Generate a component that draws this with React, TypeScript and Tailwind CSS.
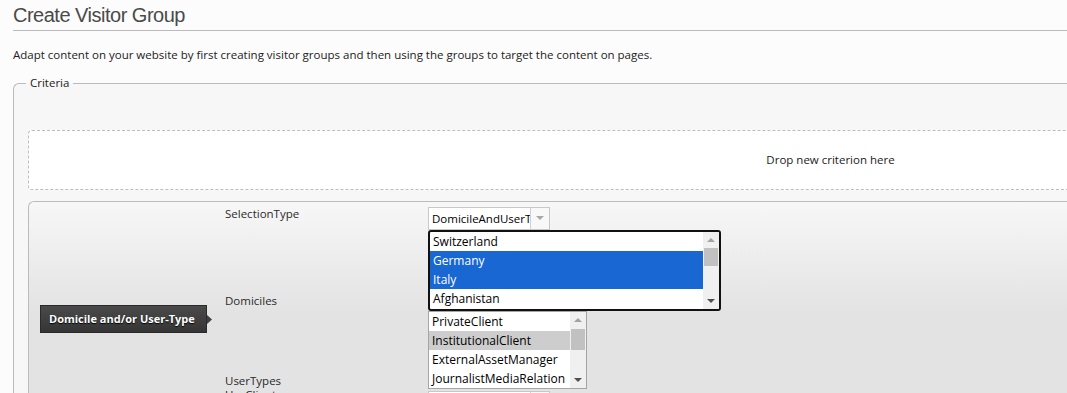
import React from "react";

type SBProps = { thumbTop: number; thumbH: number };

function Scrollbar({ thumbTop, thumbH }: SBProps) {
  return (
    <div className="relative w-[16px] h-full bg-[#f0f0f0] shrink-0">
      <svg className="absolute left-[4px] top-[5px]" width="8" height="5" viewBox="0 0 8 5">
        <path d="M0 5 L4 1 L8 5 Z" fill="#a3a3a3" />
      </svg>
      <div className="absolute left-[1px] w-[14px] bg-[#c1c1c1]" style={{ top: thumbTop, height: thumbH }} />
      <svg className="absolute left-[4px] bottom-[5px]" width="8" height="5" viewBox="0 0 8 5">
        <path d="M0 0 L8 0 L4 4 Z" fill="#505050" />
      </svg>
    </div>
  );
}

function Item({ text, sel }: { text: string; sel?: "blue" | "gray" }) {
  const cls =
    sel === "blue"
      ? "bg-[#1967d2] text-white"
      : sel === "gray"
      ? "bg-[#cdcdcd] text-black"
      : "text-black";
  return <div className={`h-[19px] leading-[19px] pl-[3px] whitespace-nowrap ${cls}`}>{text}</div>;
}

function Select({ text }: { text: string }) {
  return (
    <div className="flex w-[122px] h-[23px] bg-white border border-[#c8c8c8] text-[11.5px] text-black">
      <div className="flex-1 overflow-hidden whitespace-nowrap leading-[21px] pl-[3px]">{text}</div>
      <div className="w-[19px] border-l border-[#d0d0d0] bg-[#f8f8f8] flex items-center justify-center">
        <svg width="8" height="5" viewBox="0 0 8 5">
          <path d="M0 0 L8 0 L4 4 Z" fill="#a8a8a8" />
        </svg>
      </div>
    </div>
  );
}

export default function App() {
  return (
    <div className="w-[1067px] h-[393px] overflow-hidden bg-[#fcfcfc] font-['Open_Sans','DejaVu_Sans',sans-serif] text-[#333]">
      <div className="pl-[13px] w-[1660px]">
        <h1 className="font-['Liberation_Sans',Arial,sans-serif] text-[20px] tracking-[-0.5px] leading-[30px] h-[31px] text-[#4a4a4a] border-b border-[#bbbbbb]">
          Create Visitor Group
        </h1>
        <p className="text-[11.5px] leading-[16px] mt-[16px] text-[#222]">
          Adapt content on your website by first creating visitor groups and then using the groups to target the content on pages.
        </p>
        <fieldset className="mt-[13px] w-[1634px] border-l border-t border-[#bbbbbb] rounded-tl-[6px] bg-[#f7f7f7] pl-[14px] pr-[14px] pt-[40px] h-[400px]">
          <legend className="ml-[-2px] px-[4px] text-[11.5px] leading-[14px] text-[#222]">Criteria</legend>
          <div className="h-[60px] bg-white border border-dashed border-[#bdbdbd] rounded-[4px] flex items-center justify-center text-[11.5px] text-[#222]">
            Drop new criterion here
          </div>
          <div className="mt-[11px] border-l border-t border-[#bbbbbb] rounded-tl-[6px] bg-[linear-gradient(#f7f7f7,#e3e3e3_110px)] h-[300px] flex">
            <div className="w-[196px] pl-[11px] pt-[103px] shrink-0">
              <div className="relative w-[167px] h-[28px] bg-[linear-gradient(#4a4a4a,#353535)] border border-[#2a2a2a] text-white text-[11px] font-bold leading-[26px] pl-[8px] [text-shadow:0_1px_1px_#000]">
                Domicile and/or User-Type
                <svg className="absolute right-[-6px] top-[9px]" width="5" height="9" viewBox="0 0 5 9">
                  <path d="M0 0 L5 4.5 L0 9 Z" fill="#404040" />
                </svg>
              </div>
            </div>
            <div className="w-[203px] shrink-0 text-[11.5px] leading-[14px] text-[#2a2a2a]">
              <div className="mt-[5px]">SelectionType</div>
              <div className="mt-[73px]">Domiciles</div>
              <div className="mt-[66px]">UserTypes</div>
              <div className="mt-[0px]">UseClient</div>
            </div>
            <div className="pt-[5px] flex flex-col">
              <Select text="DomicileAndUserT" />
              <div className="w-[293px] h-[81px] bg-white border-2 border-[#111] rounded-[3px] flex overflow-hidden text-[12px]">
                <div className="flex-1">
                  <Item text="Switzerland" />
                  <Item text="Germany" sel="blue" />
                  <Item text="Italy" sel="blue" />
                  <Item text="Afghanistan" />
                </div>
                <Scrollbar thumbTop={16} thumbH={18} />
              </div>
              <div className="w-[159px] h-[78px] bg-white border border-[#a5a5a5] flex overflow-hidden text-[12px]">
                <div className="flex-1 overflow-hidden">
                  <Item text="PrivateClient" />
                  <Item text="InstitutionalClient" sel="gray" />
                  <Item text="ExternalAssetManager" />
                  <Item text="JournalistMediaRelation" />
                </div>
                <Scrollbar thumbTop={17} thumbH={21} />
              </div>
              <div className="mt-[2px]">
                <Select text="" />
              </div>
            </div>
          </div>
        </fieldset>
      </div>
    </div>
  );
}
